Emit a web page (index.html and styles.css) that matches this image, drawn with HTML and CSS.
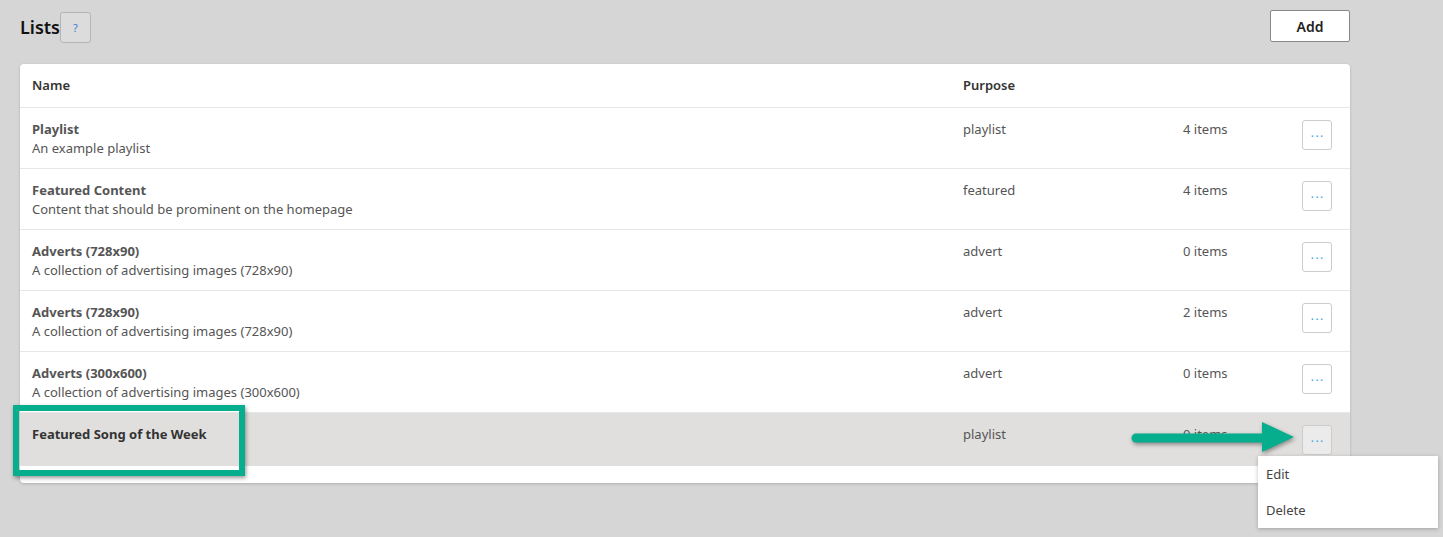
FILE: index.html
```html
<!DOCTYPE html>
<html lang="en">
<head>
    <meta charset="UTF-8">
    <title>Lists</title>
    <link rel="stylesheet" href="styles.css">
</head>
<body>
    <div class="page">
        <div class="topbar">
            <div class="title-wrap">
                <h1>Lists</h1>
                <button class="help-button">?</button>
            </div>
            <button class="add-button">Add</button>
        </div>

        <div class="card">
            <div class="row head">
                <div>Name</div>
                <div>Purpose</div>
                <div></div>
                <div></div>
            </div>
            <div class="row">
                <div><div class="name">Playlist</div><div class="desc">An example playlist</div></div>
                <div>playlist</div>
                <div>4 items</div>
                <div><button class="more">&middot;&middot;&middot;</button></div>
            </div>
            <div class="row">
                <div><div class="name">Featured Content</div><div class="desc">Content that should be prominent on the homepage</div></div>
                <div>featured</div>
                <div>4 items</div>
                <div><button class="more">&middot;&middot;&middot;</button></div>
            </div>
            <div class="row">
                <div><div class="name">Adverts (728x90)</div><div class="desc">A collection of advertising images (728x90)</div></div>
                <div>advert</div>
                <div>0 items</div>
                <div><button class="more">&middot;&middot;&middot;</button></div>
            </div>
            <div class="row">
                <div><div class="name">Adverts (728x90)</div><div class="desc">A collection of advertising images (728x90)</div></div>
                <div>advert</div>
                <div>2 items</div>
                <div><button class="more">&middot;&middot;&middot;</button></div>
            </div>
            <div class="row">
                <div><div class="name">Adverts (300x600)</div><div class="desc">A collection of advertising images (300x600)</div></div>
                <div>advert</div>
                <div>0 items</div>
                <div><button class="more">&middot;&middot;&middot;</button></div>
            </div>
            <div class="row active">
                <div><div class="name dark">Featured Song of the Week</div></div>
                <div>playlist</div>
                <div>0 items</div>
                <div><button class="more">&middot;&middot;&middot;</button></div>
            </div>
        </div>
    </div>

    <!-- dropdown for the active row -->
    <div class="menu">
        <div class="menu-item">Edit</div>
        <div class="menu-item">Delete</div>
    </div>

    <!-- annotation overlays -->
    <div class="callout"></div>
    <svg class="arrow" width="175" height="40" viewBox="0 0 175 40">
        <line x1="8" y1="22" x2="140" y2="22" stroke="#06ae8e" stroke-width="9" stroke-linecap="round"/>
        <polygon points="134,6 166,21 134,36" fill="#06ae8e"/>
    </svg>
</body>
</html>
```

FILE: styles.css
```css
body {
    margin: 0;
    background-color: #d6d6d6;
    font-family: "Noto Sans", "Open Sans", sans-serif;
    font-size: 13px;
    color: #555;
    width: 1443px;
    height: 537px;
    position: relative;
    overflow: hidden;
}
.page {
    width: 1330px;
    padding: 10px 0 0 20px;
}
.topbar {
    display: flex;
    justify-content: space-between;
    align-items: flex-start;
    height: 54px;
}
.title-wrap {
    display: flex;
    align-items: flex-start;
}
h1 {
    margin: 5px 0 0 0;
    font-size: 18px;
    font-weight: 600;
    color: #111;
}
.help-button {
    margin-top: 2px;
    width: 31px;
    height: 31px;
    border: 1px solid #b5b5b5;
    border-radius: 3px;
    background-color: #dcdcdc;
    color: #3b7fd6;
    font-size: 11px;
    font-family: inherit;
    padding: 0;
}
.add-button {
    width: 80px;
    height: 32px;
    border: 1px solid #888;
    border-radius: 2px;
    background-color: white;
    font-family: inherit;
    font-size: 14px;
    font-weight: 600;
    color: #222;
}
.card {
    background-color: white;
    border-radius: 4px;
    box-shadow: 0 1px 3px rgba(0, 0, 0, 0.18);
    padding-bottom: 17px;
}
.row {
    display: grid;
    grid-template-columns: 1fr 220px 119px 30px;
    padding: 12px 18px 0 12px;
    height: 48px;
    border-top: 1px solid #e6e6e6;
    line-height: 19px;
}
.row.head {
    border-top: none;
    height: 31px;
    font-weight: 600;
    color: #333;
}
.row.active {
    background-color: #e0dfde;
    height: 41px;
}
.name {
    font-weight: 700;
    color: #555;
}
.name.dark {
    color: #333;
}
.desc {
    color: #555;
}
.more {
    width: 30px;
    height: 30px;
    border: 1px solid #ccc;
    border-radius: 3px;
    background-color: white;
    color: #4aa8e6;
    font-size: 14px;
    padding: 0;
    letter-spacing: 0;
}
.row.active .more {
    background-color: #ebebeb;
}
.menu {
    position: absolute;
    left: 1258px;
    top: 456px;
    width: 180px;
    background-color: white;
    box-shadow: 0 1px 4px rgba(0, 0, 0, 0.25);
}
.menu-item {
    padding: 0 8px;
    height: 36px;
    line-height: 36px;
    color: #444;
}
.callout {
    position: absolute;
    left: 13px;
    top: 405px;
    width: 220px;
    height: 59px;
    border: 6px solid #06ae8e;
    box-shadow: 1px 2px 4px rgba(0, 0, 0, 0.4);
}
.arrow {
    position: absolute;
    left: 1128px;
    top: 416px;
    filter: drop-shadow(1px 2px 2px rgba(0, 0, 0, 0.4));
}
```
